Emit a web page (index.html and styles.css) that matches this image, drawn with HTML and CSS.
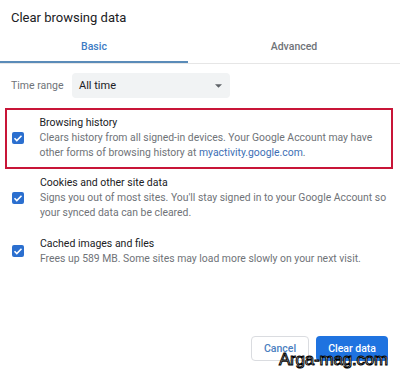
FILE: index.html
```html
<!DOCTYPE html>
<html lang="en">
<head>
  <meta charset="UTF-8">
  <meta name="viewport" content="width=device-width, initial-scale=1.0">
  <title>Clear browsing data</title>
  <link rel="stylesheet" href="styles.css">
</head>
<body>
  <div class="dialog">
    <div class="dialog-title">Clear browsing data</div>

    <div class="tabs">
      <div class="tab tab-active">Basic</div>
      <div class="tab">Advanced</div>
    </div>

    <div class="range-row">
      <span class="range-label">Time range</span>
      <div class="range-select">
        <span>All time</span>
        <svg class="range-arrow" viewBox="0 0 10 5"><path d="M0 0h10L5 5z"/></svg>
      </div>
    </div>

    <div class="options">
      <div class="option option-marked">
        <div class="checkbox">
          <svg viewBox="0 0 12 12"><path d="M2.5 6.2l2.3 2.3 4.7-4.7" /></svg>
        </div>
        <div class="option-text">
          <div class="option-title">Browsing history</div>
          <div class="option-desc">Clears history from all signed-in devices. Your Google Account may have other forms of browsing history at <a class="link">myactivity.google.com</a>.</div>
        </div>
      </div>

      <div class="option">
        <div class="checkbox">
          <svg viewBox="0 0 12 12"><path d="M2.5 6.2l2.3 2.3 4.7-4.7" /></svg>
        </div>
        <div class="option-text">
          <div class="option-title">Cookies and other site data</div>
          <div class="option-desc">Signs you out of most sites. You'll stay signed in to your Google Account so your synced data can be cleared.</div>
        </div>
      </div>

      <div class="option">
        <div class="checkbox">
          <svg viewBox="0 0 12 12"><path d="M2.5 6.2l2.3 2.3 4.7-4.7" /></svg>
        </div>
        <div class="option-text">
          <div class="option-title">Cached images and files</div>
          <div class="option-desc">Frees up 589 MB. Some sites may load more slowly on your next visit.</div>
        </div>
      </div>
    </div>

    <div class="dialog-actions">
      <button class="btn btn-cancel">Cancel</button>
      <button class="btn btn-primary">Clear data</button>
    </div>

    <div class="watermark">Arga-mag.com</div>
  </div>
</body>
</html>
```

FILE: styles.css
```css
/* base */
* {
  margin: 0;
  padding: 0;
  box-sizing: border-box;
}

body {
  font-family: Roboto, 'Liberation Sans', sans-serif;
  background-color: #fff;
  color: #202124;
}

.dialog {
  position: relative;
  width: 400px;
  height: 375px;
  display: flex;
  flex-direction: column;
}

/* title */
.dialog-title {
  font-size: 13px;
  padding: 10px 11px 0;
  height: 31px;
  color: #202124;
}

/* tabs */
.tabs {
  display: flex;
  border-bottom: 1px solid #e6e6e6;
}

.tab {
  flex: 1;
  text-align: center;
  font-size: 10.5px;
  font-weight: 500;
  color: #6f7378;
  height: 32px;
  padding-top: 9px;
}

.tab-active {
  flex: 0 0 188px;
  color: #3d7cc4;
  border-bottom: 2px solid #5a8bb8;
}

/* time range */
.range-row {
  display: flex;
  align-items: center;
  padding: 9px 0 0 11px;
}

.range-label {
  font-size: 10.5px;
  color: #6f7378;
  width: 61px;
}

.range-select {
  width: 158px;
  height: 25px;
  background-color: #f1f3f4;
  border-radius: 4px;
  display: flex;
  align-items: center;
  justify-content: space-between;
  padding: 0 8px 0 7px;
  font-size: 11px;
  color: #202124;
}

.range-arrow {
  width: 7px;
  height: 4px;
  fill: #5f6368;
}

/* options */
.options {
  display: flex;
  flex-direction: column;
  padding-top: 10px;
}

.option {
  display: flex;
  align-items: center;
  padding: 0 0 0 7px;
  margin: 0 7px 16px 5px;
}

.option-marked {
  border: 2.5px solid #c81538;
  padding: 5px 4px 7px 4.5px;
  margin-bottom: 6px;
}

.checkbox {
  flex: 0 0 12px;
  width: 12px;
  height: 12px;
  background-color: #2b6fcf;
  border-radius: 2px;
  margin-right: 16px;
  display: flex;
}

.checkbox svg {
  width: 12px;
  height: 12px;
  fill: none;
  stroke: #fff;
  stroke-width: 1.6;
}

.option-title {
  font-size: 10.5px;
  line-height: 15px;
  color: #202124;
}

.option-desc {
  font-size: 10.4px;
  line-height: 15px;
  color: #6f7378;
}

.link {
  color: #3d6fb5;
  text-decoration: none;
}

/* actions */
.dialog-actions {
  margin-top: auto;
  display: flex;
  justify-content: flex-end;
  gap: 7px;
  padding: 0 12px 14px;
}

.btn {
  font-family: Roboto, 'Liberation Sans', sans-serif;
  font-size: 10.5px;
  font-weight: 500;
  height: 25px;
  border-radius: 4px;
  padding: 0 12px;
  cursor: pointer;
}

.btn-cancel {
  background-color: #fff;
  color: #4b7fc0;
  border: 1px solid #dadce0;
}

.btn-primary {
  background-color: #1f73e0;
  color: #fff;
  border: none;
}

/* watermark over the buttons */
.watermark {
  position: absolute;
  right: 12px;
  bottom: 5px;
  font-family: 'Liberation Sans', sans-serif;
  font-size: 17px;
  color: #fff;
  -webkit-text-stroke: 1px #000;
  letter-spacing: -0.2px;
}
```
